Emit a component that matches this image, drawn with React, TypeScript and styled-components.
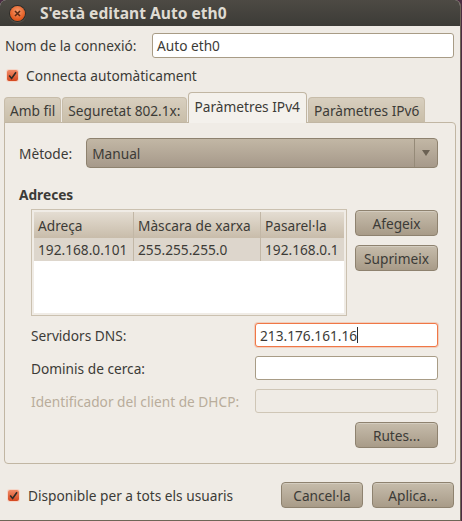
import styled, { createGlobalStyle } from 'styled-components'

const Global = createGlobalStyle`
  html, body {
    margin: 0;
    padding: 0;
    background: #4a2c42;
  }
  body {
    font-family: 'Noto Sans', 'DejaVu Sans', sans-serif;
    font-size: 13.7px;
    color: #3c3b37;
  }
`

// Window frame
const Window = styled.div`
  width: 460px;
  height: 520px;
  display: flex;
  flex-direction: column;
  background: #efebe5;
  border-radius: 6px 6px 0 0;
  border-right: 1px solid #6e6556;
  border-bottom: 1px solid #6e6556;
  overflow: hidden;
`

const TitleBar = styled.div`
  height: 26px;
  flex: none;
  display: flex;
  align-items: center;
  gap: 15px;
  padding-left: 10px;
  background: linear-gradient(#4d4a44, #3c3b37);
  color: #dfdbd2;
  font-weight: bold;
  font-size: 15.6px;
`

const CloseBtn = styled.div`
  width: 15px;
  height: 15px;
  border-radius: 50%;
  background: radial-gradient(circle at 50% 35%, #f69a6c, #e2571c 70%);
  box-shadow: 0 0 0 1px #2e2c28, 0 1px 1px 1px #5a564e;
  display: flex;
  align-items: center;
  justify-content: center;
`

const Body = styled.div`
  flex: 1;
  display: flex;
  flex-direction: column;
  padding: 7px 6px 0 4px;
`

const Row = styled.div`
  display: flex;
  align-items: center;
`

const Label = styled.span<{ $disabled?: boolean }>`
  color: ${(p) => (p.$disabled ? '#b9ad9b' : '#3c3b37')};
  white-space: nowrap;
`

const Entry = styled.div<{ $focus?: boolean; $disabled?: boolean }>`
  box-sizing: border-box;
  height: 25px;
  display: flex;
  align-items: center;
  padding: 0 4px;
  border-radius: 3px;
  border: 1px solid
    ${(p) => (p.$focus ? '#f07746' : p.$disabled ? '#cfc6b6' : '#a89c86')};
  background: ${(p) => (p.$disabled ? '#efebe5' : '#ffffff')};
  box-shadow: ${(p) => (p.$focus ? '0 0 0 1px rgba(240,119,70,0.25)' : 'none')};
  color: #3c3b37;
`

const Caret = styled.span`
  display: inline-block;
  width: 1px;
  height: 16px;
  background: #2b2b2b;
`

const Check = styled.div`
  width: 11px;
  height: 11px;
  border-radius: 2px;
  background: linear-gradient(#f28b67, #d4481f);
  box-shadow: 0 0 0 1px #f5d6c8;
  display: flex;
  align-items: center;
  justify-content: center;
  margin-right: 8px;
`

// Notebook
const Tabs = styled.div`
  display: flex;
  align-items: flex-end;
  height: 30px;
  margin-top: 9px;
  position: relative;
  z-index: 1;
`

const Tab = styled.div<{ $active?: boolean }>`
  box-sizing: border-box;
  height: ${(p) => (p.$active ? '31px' : '26px')};
  padding: 0 ${(p) => (p.$active ? '6px' : '5px')};
  margin-right: 1px;
  display: flex;
  align-items: center;
  padding-bottom: ${(p) => (p.$active ? '3px' : '0')};
  border: 1px solid ${(p) => (p.$active ? '#c1b6a3' : '#c7bca9')};
  border-bottom: ${(p) => (p.$active ? 'none' : '1px solid #c1b6a3')};
  border-radius: 4px 4px 0 0;
  background: ${(p) => (p.$active ? '#f4f1ec' : 'linear-gradient(#d8cfbf, #c9bea9)')};
  white-space: nowrap;
`

const Panel = styled.div`
  box-sizing: border-box;
  width: 452px;
  height: 342px;
  margin-top: -1px;
  border: 1px solid #c1b6a3;
  border-radius: 0 4px 4px 4px;
  background: #f0ece6;
  padding: 15px 17px 0 14px;
  display: flex;
  flex-direction: column;
`

const Combo = styled.div`
  box-sizing: border-box;
  flex: 1;
  height: 30px;
  margin-left: 14px;
  display: flex;
  align-items: center;
  border: 1px solid #8e826f;
  border-radius: 4px;
  background: linear-gradient(#c2b7a5, #a6998a);
  padding-left: 5px;
`

const ComboText = styled.span`
  flex: 1;
`

const ComboArrow = styled.div`
  width: 22px;
  height: 100%;
  border-left: 1px solid #958a78;
  display: flex;
  align-items: center;
  justify-content: center;
`

const Heading = styled.div`
  font-weight: bold;
  margin-top: 17px;
`

const AddrArea = styled.div`
  display: flex;
  gap: 8px;
  margin-top: 5px;
  padding-left: 12px;
`

const Table = styled.div`
  box-sizing: border-box;
  width: 316px;
  height: 107px;
  border: 1px solid #cbc1b0;
  padding: 2px;
  background: #f0ece6;
`

const TableInner = styled.div`
  height: 100%;
  background: #ffffff;
`

const TRow = styled.div<{ $head?: boolean }>`
  display: grid;
  grid-template-columns: 100px 127px 1fr;
  height: ${(p) => (p.$head ? '26px' : '23px')};
  background: ${(p) =>
    p.$head ? 'linear-gradient(#e4ddd2, #c8bcaa)' : '#ddd6cc'};
`

const TCell = styled.div`
  display: flex;
  align-items: center;
  padding-left: 4px;
  border-right: 1px solid #c2b7a6;
  white-space: nowrap;
  overflow: hidden;
  &:last-child {
    border-right: none;
  }
`

const SideButtons = styled.div`
  display: flex;
  flex-direction: column;
  gap: 9px;
  padding-top: 1px;
`

const Button = styled.div<{ $w?: number }>`
  box-sizing: border-box;
  width: ${(p) => p.$w ?? 83}px;
  height: 26px;
  display: flex;
  align-items: center;
  justify-content: center;
  border: 1px solid #8e826f;
  border-radius: 4px;
  background: linear-gradient(#c6bcab, #a89b88);
  box-shadow: inset 0 1px 0 rgba(255, 255, 255, 0.25);
  color: #3c3b37;
`

const Form = styled.div`
  display: grid;
  grid-template-columns: 1fr 183px;
  row-gap: 9px;
  align-items: center;
  margin-top: 7px;
  padding-left: 12px;
`

const FormEntry = styled(Entry)`
  height: 24px;
`

const RightRow = styled.div`
  display: flex;
  justify-content: flex-end;
  margin-top: 9px;
`

const Footer = styled.div`
  display: flex;
  align-items: center;
  margin-top: 18px;
  padding-left: 4px;
  gap: 9px;
`

const Spacer = styled.div`
  flex: 1;
`

function CheckMark() {
  return (
    <svg width="9" height="9" viewBox="0 0 9 9">
      <path d="M1.2 4.6 L3.6 7.4 L8 1.2" fill="none" stroke="#2e2a26" strokeWidth="1.6" />
    </svg>
  )
}

export default function App() {
  return (
    <>
      <Global />
      <Window>
        <TitleBar>
          <CloseBtn>
            <svg width="7" height="7" viewBox="0 0 7 7">
              <path d="M1 1 L6 6 M6 1 L1 6" stroke="#5a2a14" strokeWidth="1.6" />
            </svg>
          </CloseBtn>
          <span>S'està editant Auto eth0</span>
        </TitleBar>
        <Body>
          <Row>
            <Label style={{ paddingLeft: 1, width: 147 }}>Nom de la connexió:</Label>
            <Entry style={{ flex: 1 }}>Auto eth0</Entry>
          </Row>
          <Row style={{ marginTop: 8, paddingLeft: 3, height: 18 }}>
            <Check>
              <CheckMark />
            </Check>
            <Label>Connecta automàticament</Label>
          </Row>
          <Tabs>
            <Tab>Amb fil</Tab>
            <Tab>Seguretat 802.1x:</Tab>
            <Tab $active>Paràmetres IPv4</Tab>
            <Tab>Paràmetres IPv6</Tab>
          </Tabs>
          <Panel>
            <Row>
              <Label>Mètode:</Label>
              <Combo>
                <ComboText>Manual</ComboText>
                <ComboArrow>
                  <svg width="8" height="6" viewBox="0 0 8 6">
                    <path d="M0 0 H8 L4 6 Z" fill="#6b6153" />
                  </svg>
                </ComboArrow>
              </Combo>
            </Row>
            <Heading>Adreces</Heading>
            <AddrArea>
              <Table>
                <TableInner>
                  <TRow $head>
                    <TCell>Adreça</TCell>
                    <TCell>Màscara de xarxa</TCell>
                    <TCell>Pasarel·la</TCell>
                  </TRow>
                  <TRow>
                    <TCell>192.168.0.101</TCell>
                    <TCell>255.255.255.0</TCell>
                    <TCell>192.168.0.1</TCell>
                  </TRow>
                </TableInner>
              </Table>
              <SideButtons>
                <Button>Afegeix</Button>
                <Button>Suprimeix</Button>
              </SideButtons>
            </AddrArea>
            <Form>
              <Label>Servidors DNS:</Label>
              <FormEntry $focus>
                213.176.161.16
                <Caret />
              </FormEntry>
              <Label>Dominis de cerca:</Label>
              <FormEntry />
              <Label $disabled>Identificador del client de DHCP:</Label>
              <FormEntry $disabled />
            </Form>
            <RightRow>
              <Button>Rutes...</Button>
            </RightRow>
          </Panel>
          <Footer>
            <Check>
              <CheckMark />
            </Check>
            <Label style={{ marginLeft: -8 }}>Disponible per a tots els usuaris</Label>
            <Spacer />
            <Button $w={82}>Cancel·la</Button>
            <Button $w={82}>Aplica...</Button>
          </Footer>
        </Body>
      </Window>
    </>
  )
}
